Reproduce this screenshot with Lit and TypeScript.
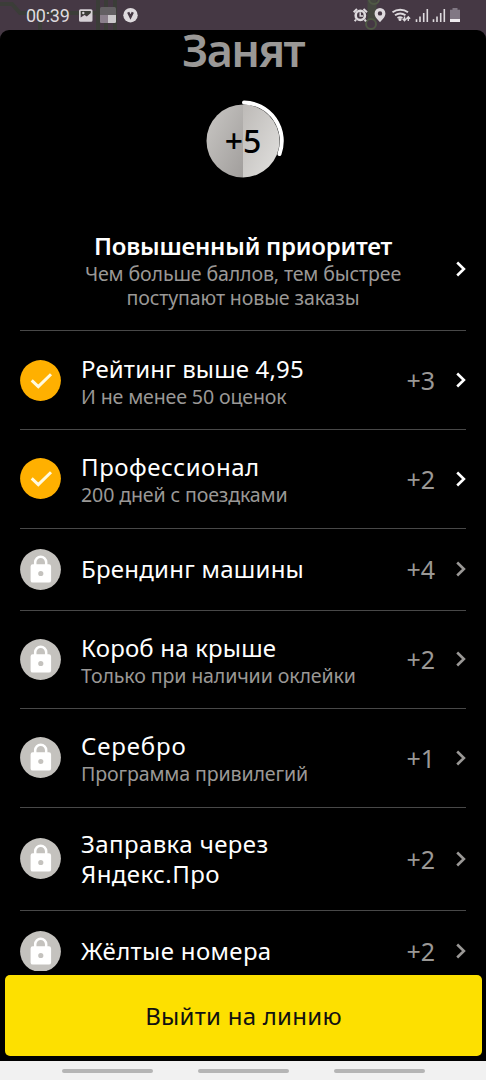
import { LitElement, html, css, svg, nothing } from "lit";
import { customElement, property } from "lit/decorators.js";
import { styleMap } from "lit/directives/style-map.js";

interface Bonus {
  title: string;
  note?: string;
  points: string;
  done?: boolean;
  size: string;
  tracking: number;
}

const BONUSES: Bonus[] = [
  { title: "Рейтинг выше 4,95", note: "И не менее 50 оценок", points: "+3", done: true, size: "first", tracking: 0.15 },
  { title: "Профессионал", note: "200 дней с поездками", points: "+2", done: true, size: "regular", tracking: 0.55 },
  { title: "Брендинг машины", points: "+4", size: "short", tracking: 0.25 },
  { title: "Короб на крыше", note: "Только при наличии оклейки", points: "+2", size: "regular", tracking: 0.18 },
  { title: "Серебро", note: "Программа привилегий", points: "+1", size: "regular", tracking: 0.85 },
  { title: "Заправка через Яндекс.Про", points: "+2", size: "tall", tracking: 0.4 },
  { title: "Жёлтые номера", points: "+2", size: "short", tracking: 0.35 },
];

const chevron = html`<svg width="12" height="16" viewBox="0 0 12 16" fill="none" stroke="currentColor" stroke-width="2.6">
  <path d="M3.200 1.500 9.900 8 3.200 14.500" />
</svg>`;

@customElement("bonus-row")
export class BonusRow extends LitElement {
  @property({ attribute: false }) bonus!: Bonus;

  static styles = css`
    :host { display: block; margin: 0 20px; }
    .row {
      box-sizing: border-box;
      display: grid;
      grid-template-columns: 41px 1fr auto 12px;
      align-items: center;
      border-bottom: 1px solid #484848;
      color: #9a9896;
    }
    .first { height: 99px; }
    .regular { height: 98.5px; }
    .short { height: 82px; }
    .tall { height: 103px; }
    .badge { display: block; }
    .texts { padding-left: 20px; }
    .texts.pair { padding-top: 2px; }
    .title { color: #fff; font-size: 24px; line-height: 30px; max-width: 260px; }
    .tall .title { max-width: 210px; }
    .note { margin-top: 1px; font-size: 19.6px; line-height: 24px; letter-spacing: -0.14px; white-space: nowrap; }
    .points { font-size: 25px; line-height: 30px; margin-right: 19px; }
    .chevron { display: flex; }
    .chevron.done { color: #fff; }
  `;

  render() {
    const b = this.bonus;
    return html`<div class="row ${b.size}">
      <svg class="badge" width="41" height="41" viewBox="0 0 41 41">
        <circle cx="20.5" cy="20.5" r="20.4" fill=${b.done ? "#ffb000" : "#c4c2be"} />
        ${b.done
          ? svg`<path d="M11.7 20.4 18.3 26.6 31 14.2" fill="none" stroke="#fffadf" stroke-width="3" />`
          : svg`<path d="M15.2 16v-2.800a5.500 5.500 0 0 1 11 0V16" fill="none" stroke="#fff" stroke-width="2.500" />
              <path fill="#fff" fill-rule="evenodd" d="M12.8 15.3h16.1a2.2 2.2 0 0 1 2.2 2.2v13.9a2.2 2.2 0 0 1-2.2 2.2H12.8a2.2 2.2 0 0 1-2.2-2.2V17.500a2.200 2.200 0 0 1 2.200-2.200ZM20.800 21.900a2.600 2.600 0 1 0 0 5.200 2.600 2.600 0 0 0 0-5.200Z" />`}
      </svg>
      <div class="texts ${b.note ? "pair" : ""}">
        <div class="title" style=${styleMap({ letterSpacing: `${b.tracking}px` })}>${b.title}</div>
        ${b.note ? html`<div class="note">${b.note}</div>` : nothing}
      </div>
      <div class="points">${b.points}</div>
      <div class="chevron ${b.done ? "done" : ""}">${chevron}</div>
    </div>`;
  }
}

@customElement("status-bar")
export class StatusBar extends LitElement {
  static styles = css`
    :host { display: block; height: 40px; background: #453844; }
    .map { position: absolute; left: 0; top: 0; }
    .bar {
      position: relative;
      box-sizing: border-box;
      height: 30px;
      padding: 0 25px 0 26px;
      display: flex;
      justify-content: space-between;
      color: #dedade;
    }
    .clock { font: 18px/31px Roboto, sans-serif; letter-spacing: -0.25px; }
    .side { display: flex; align-items: flex-start; }
  `;

  render() {
    return html`
      <svg class="map" width="486" height="40" viewBox="0 0 486 40" fill="none">
        <path d="M0 4h12l8 9h78M40 13V40M98 0V30M106 0V30M115 0V30" stroke="#3b3d38" stroke-width="4" />
        <path d="M372 0v20" stroke="#454840" stroke-width="9" />
        <circle cx="371" cy="24" r="5" stroke="#4f5945" stroke-width="2" />
        <circle cx="374" cy="-1" r="5" stroke="#4f5945" stroke-width="2" />
      </svg>
      <div class="bar">
        <div class="side">
          <span class="clock">00:39</span>
        </div>
        <svg class="map" width="486" height="30" viewBox="0 0 486 30">
          <path fill="#d6d1d6" fill-rule="evenodd" d="M80.500 9.300h10.500a1.500 1.500 0 0 1 1.500 1.500v9.500a1.500 1.500 0 0 1-1.500 1.500H80.500A1.500 1.500 0 0 1 79 20.300v-9.500a1.500 1.500 0 0 1 1.500-1.500ZM80.700 11v6.500L84.500 15l2.300 1.500 4-3.500V11Z" />
          <circle cx="83.300" cy="13" r="1.200" fill="#d6d1d6" />
          <rect x="100" y="7" width="16" height="16" rx="1.500" fill="#636063" />
          <path d="M100 15h8v8h-6.500a1.500 1.500 0 0 1-1.500-1.500Z" fill="#8b808c" />
          <path d="M108 15h8v6.500a1.500 1.500 0 0 1-1.500 1.500H108Z" fill="#cbc9cb" />
          <circle cx="130.500" cy="15.200" r="7.200" fill="#dedade" />
          <path d="M128.200 12.200 130.500 17 132.800 12.200" fill="none" stroke="#453844" stroke-width="2.400" />
          <g fill="none" stroke="#dedade">
            <circle cx="360.300" cy="15.400" r="4.600" stroke-width="2.600" />
            <path d="M353.700 12.300 357 9M367 12.300 363.500 9M356 19.500 354.800 21.300M364.600 19.500 365.900 21.300" stroke-width="2" />
            <path d="M360.200 12.300v3.600h2.800" stroke-width="1.500" />
            <path d="M392.500 12.300a13 13 0 0 1 15.500 0M395 15.300a9 9 0 0 1 10.500 0M397.500 18a5 5 0 0 1 5 0" stroke-width="1.900" />
            <path d="M404.500 16.500v4M402.700 18.800l1.800 2 1.800-2M408.300 21v-4M406.500 18.700l1.800-2 1.800 2" stroke-width="1.400" />
          </g>
          <circle cx="400" cy="19.600" r="1.500" fill="#dedade" />
          <path fill="#dedade" fill-rule="evenodd" d="M380 8a5.400 5.400 0 0 1 5.400 5.400c0 3.600-3.300 6-5.400 8.800-2.100-2.800-5.400-5.200-5.400-8.800A5.400 5.400 0 0 1 380 8Zm0 3.200a2.200 2.200 0 1 0 0 4.400 2.200 2.200 0 0 0 0-4.400Z" />
          <path d="M416.500 19.300V22M420 16.500V22M423.700 13V22M427.300 9V22M433.500 19.300V22M437 16.500V22M440.700 13V22M444.300 9V22" stroke="#dedade" stroke-width="1.600" />
          <path d="M452.500 8h5v1.800h2.500V22h-10V9.800h2.500Z" fill="#817884" />
          <path d="M450 19h10v3h-10Z" fill="#eeebee" />
        </svg>
      </div>`;
  }
}

@customElement("app-root")
export class AppRoot extends LitElement {
  static styles = css`
    :host {
      display: flex;
      flex-direction: column;
      position: relative;
      height: 1080px;
      overflow: hidden;
      background: #000;
      font-family: "Noto Sans", sans-serif;
    }
    .sheet {
      box-sizing: border-box;
      height: 941px;
      margin-top: -10px;
      border-radius: 9px 9px 0 0;
      background: #000;
      overflow: hidden;
      position: relative;
    }
    .heading {
      margin: 0;
      height: 70px;
      line-height: 39px;
      text-align: center;
      font-size: 45px;
      font-weight: 600;
      letter-spacing: -1.6px;
      color: #9a9896;
    }
    .gauge {
      display: grid;
      justify-content: center;
      height: 82px;
    }
    .gauge > * { grid-area: 1 / 1; }
    .value { font-size: 32px; font-weight: 500; line-height: 81px; text-align: center; color: #000; z-index: 1; }
    .priority {
      box-sizing: border-box;
      height: 149px;
      margin: 0 20px;
      display: grid;
      grid-template-columns: 1fr 12px;
      border-bottom: 1px solid #484848;
      text-align: center;
      color: #9a9896;
    }
    .lead { padding-left: 12px; }
    .strong { color: #fff; font-size: 24px; font-weight: 600; line-height: 30px; padding-top: 49px; letter-spacing: -0.24px; }
    .small { margin-top: 1px; font-size: 19.6px; line-height: 24px; letter-spacing: -0.14px; }
    .arrow { color: #fff; padding-top: 79px; }
    .arrow svg { display: block; }
    .action {
      height: 81px;
      margin: 4px 4px 5px 5px;
      border: none;
      border-radius: 5px;
      background: #fde000;
      color: #111;
      font: 24px/81px "Noto Sans", sans-serif;
      letter-spacing: 0.25px;
      padding: 0;
    }
    .nav {
      height: 19px;
      background: #f1f1f1;
      display: flex;
      justify-content: center;
      gap: 45px;
    }
    .pill { width: 91px; height: 4px; margin-top: 8px; border-radius: 2px; background: #b5b5b5; }
  `;

  render() {
    return html`
      <status-bar></status-bar>
      <main class="sheet">
        <h1 class="heading">Занят</h1>
        <div class="gauge">
          <svg width="82" height="82" viewBox="0 0 82 82">
            <defs>
              <linearGradient id="left" x1="0" y1="0" x2="1" y2="1">
                <stop offset="0" stop-color="#c9c7c4" /><stop offset="1" stop-color="#a19e9c" />
              </linearGradient>
              <linearGradient id="right" x1="0" y1="0" x2="1" y2="1">
                <stop offset="0" stop-color="#bdbab7" /><stop offset="1" stop-color="#e2e1df" />
              </linearGradient>
            </defs>
            <path d="M41 4.500a36.500 36.500 0 0 0 0 73Z" fill="url(#left)" />
            <path d="M41 4.500a36.500 36.500 0 0 1 0 73Z" fill="url(#right)" />
            <path d="M42 2.500A38.500 38.500 0 0 1 77.500 54" fill="none" stroke="#fff" stroke-width="4" stroke-linecap="round" />
          </svg>
          <div class="value">+5</div>
        </div>
        <section class="priority">
          <div class="lead">
            <div class="strong">Повышенный приоритет</div>
            <div class="small">Чем больше баллов, тем быстрее<br />поступают новые заказы</div>
          </div>
          <div class="arrow">${chevron}</div>
        </section>
        ${BONUSES.map((b) => html`<bonus-row .bonus=${b}></bonus-row>`)}
      </main>
      <button class="action">Выйти на линию</button>
      <nav class="nav">
        <div class="pill"></div><div class="pill"></div><div class="pill"></div>
      </nav>`;
  }
}
